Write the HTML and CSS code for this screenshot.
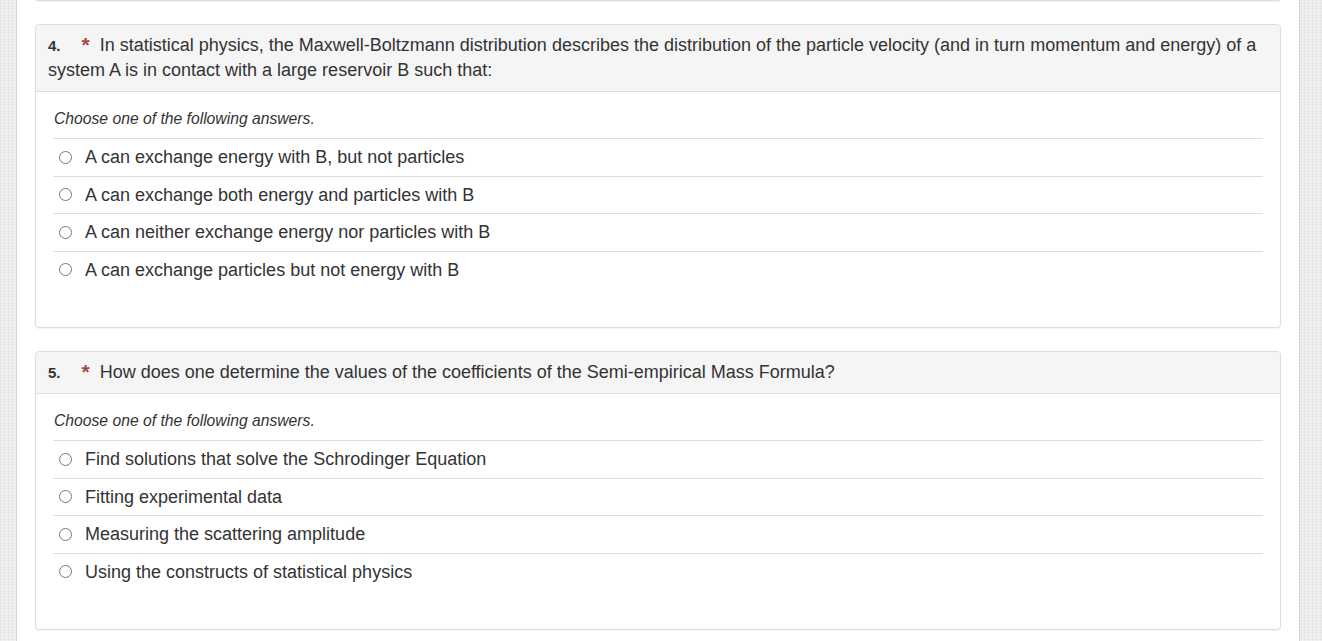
FILE: index.html
```html
<!DOCTYPE html>
<html>
<head>
<meta charset="utf-8">
<link rel="stylesheet" href="styles.css">
</head>
<body>
<div class="page">
  <aside class="strip strip-left"></aside>
  <main class="content">
    <div class="prev-card"></div>

    <section class="card">
      <header class="card-head">
        <span class="num">4.</span><span class="req">*</span>In statistical physics, the Maxwell-Boltzmann distribution describes the distribution of the particle velocity (and in turn momentum and energy) of a system A is in contact with a large reservoir B such that:
      </header>
      <div class="card-body">
        <p class="hint">Choose one of the following answers.</p>
        <ul class="answers">
          <li><span class="radio"></span>A can exchange energy with B, but not particles</li>
          <li><span class="radio"></span>A can exchange both energy and particles with B</li>
          <li><span class="radio"></span>A can neither exchange energy nor particles with B</li>
          <li><span class="radio"></span>A can exchange particles but not energy with B</li>
        </ul>
      </div>
    </section>

    <section class="card">
      <header class="card-head">
        <span class="num">5.</span><span class="req">*</span>How does one determine the values of the coefficients of the Semi-empirical Mass Formula?
      </header>
      <div class="card-body">
        <p class="hint">Choose one of the following answers.</p>
        <ul class="answers">
          <li><span class="radio"></span>Find solutions that solve the Schrodinger Equation</li>
          <li><span class="radio"></span>Fitting experimental data</li>
          <li><span class="radio"></span>Measuring the scattering amplitude</li>
          <li><span class="radio"></span>Using the constructs of statistical physics</li>
        </ul>
      </div>
    </section>
  </main>
  <aside class="strip strip-right"></aside>
</div>
</body>
</html>
```
FILE: styles.css
```css
html, body {
  margin: 0;
  padding: 0;
  height: 100%;
  overflow: hidden;
}
body {
  font-family: "Liberation Sans", Arial, sans-serif;
  color: #333;
  background: #fff;
}
.page {
  display: flex;
  height: 641px;
}
.strip {
  background-color: #ebebeb;
  background-image:
    repeating-linear-gradient(0deg, rgba(255,255,255,0.35) 0 1px, transparent 1px 3px),
    repeating-linear-gradient(90deg, rgba(0,0,0,0.03) 0 1px, transparent 1px 4px);
}
.strip-left {
  width: 16px;
  border-right: 1px solid #d6d6d6;
}
.strip-right {
  width: 22px;
  border-left: 1px solid #d6d6d6;
}
.content {
  flex: 1;
  padding: 0 18px;
  background: #fff;
}
.prev-card {
  height: 0;
  border-bottom: 1px solid #ddd;
  border-radius: 0 0 4px 4px;
  box-shadow: 0 1px 1px rgba(0,0,0,0.06);
  margin: 0 1px 23px;
}
.card {
  border: 1px solid #ddd;
  border-radius: 4px;
  box-shadow: 0 1px 1px rgba(0,0,0,0.05);
  margin-bottom: 23px;
  background: #fff;
}
.card-head {
  background: #f5f5f5;
  border-bottom: 1px solid #ddd;
  border-radius: 3px 3px 0 0;
  padding: 7px 12px 8px;
  font-size: 18px;
  line-height: 25px;
}
.num {
  font-weight: bold;
  font-size: 15px;
  margin-right: 21px;
}
.req {
  color: #a94442;
  font-weight: bold;
  font-size: 21px;
  vertical-align: -1px;
  margin-right: 10px;
}
.card-body {
  padding: 17px 17px 39px;
}
.hint {
  margin: 0 0 9px 1px;
  font-style: italic;
  font-size: 15.7px;
  line-height: 20px;
}
.answers {
  list-style: none;
  margin: 0;
  padding: 0;
}
.answers li {
  box-sizing: border-box;
  display: flex;
  align-items: center;
  height: 37.5px;
  border-top: 1px solid #ddd;
  padding: 0 0 0 6px;
  font-size: 18px;
  line-height: 20px;
}
.radio {
  width: 11px;
  height: 11px;
  border: 1px solid #777;
  border-radius: 50%;
  margin-right: 13px;
  flex: none;
  background: #fff;
}
```
